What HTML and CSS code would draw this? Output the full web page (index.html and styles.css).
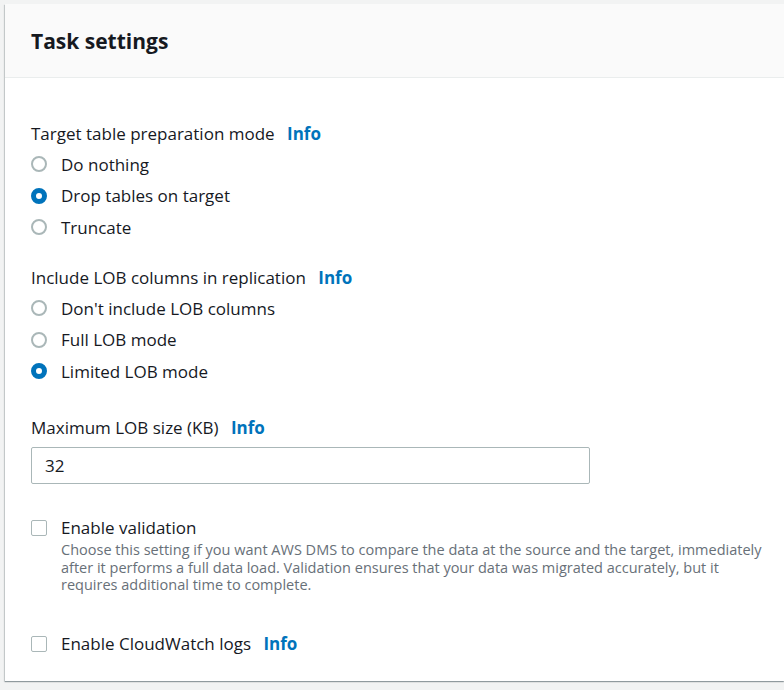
FILE: index.html
```html
<!DOCTYPE html>
<html lang="en">
<head>
<meta charset="utf-8">
<title>Task settings</title>
<link rel="stylesheet" href="styles.css">
</head>
<body>
<div class="panel">
  <div class="panel-header">
    <h2 class="title">Task settings</h2>
  </div>
  <div class="panel-body">
    <div class="field">
      <div class="label">Target table preparation mode <a class="info">Info</a></div>
      <div class="options">
        <div class="option"><span class="radio"></span><span class="opt-text">Do nothing</span></div>
        <div class="option"><span class="radio checked"></span><span class="opt-text">Drop tables on target</span></div>
        <div class="option"><span class="radio"></span><span class="opt-text">Truncate</span></div>
      </div>
    </div>
    <div class="field field-lob">
      <div class="label">Include LOB columns in replication <a class="info">Info</a></div>
      <div class="options">
        <div class="option"><span class="radio"></span><span class="opt-text">Don't include LOB columns</span></div>
        <div class="option"><span class="radio"></span><span class="opt-text">Full LOB mode</span></div>
        <div class="option"><span class="radio checked"></span><span class="opt-text">Limited LOB mode</span></div>
      </div>
    </div>
    <div class="field field-size">
      <div class="label">Maximum LOB size (KB) <a class="info">Info</a></div>
      <div class="input">32</div>
    </div>
    <div class="check-row check-validation">
      <span class="checkbox"></span>
      <div class="check-content">
        <div class="check-label">Enable validation</div>
        <div class="desc">Choose this setting if you want AWS DMS to compare the data at the source and the target, immediately after it performs a full data load. Validation ensures that your data was migrated accurately, but it requires additional time to complete.</div>
      </div>
    </div>
    <div class="check-row check-logs">
      <span class="checkbox"></span>
      <div class="check-content">
        <div class="check-label">Enable CloudWatch logs <a class="info">Info</a></div>
      </div>
    </div>
  </div>
</div>
</body>
</html>
```
FILE: styles.css
```css
html, body {
  margin: 0;
  padding: 0;
}
body {
  background: #f2f3f3;
  overflow: hidden;
  font-family: "Open Sans", "Noto Sans", sans-serif;
  color: #16191f;
  padding: 4px 0 0 5px;
  height: 690px;
  box-sizing: border-box;
}
.panel {
  width: 779px;
  background: #ffffff;
  box-shadow: 0 1px 1px 0 rgba(0, 28, 36, 0.3), -1px 1px 1px 0 rgba(0, 28, 36, 0.15);
}
.panel-header {
  height: 73px;
  background: #fafafa;
  border-bottom: 1px solid #eaeded;
  display: flex;
  align-items: center;
  padding-left: 26px;
}
.title {
  margin: 0;
  font-size: 21px;
  font-weight: 700;
  line-height: 24px;
}
.panel-body {
  padding: 45px 26px 26px 26px;
}
.label {
  font-size: 17px;
  line-height: 22px;
}
.info {
  color: #0073bb;
  font-weight: 700;
  margin-left: 8px;
}
.options {
  margin-top: 3.5px;
}
.option {
  display: flex;
  align-items: center;
  height: 31.5px;
}
.opt-text {
  font-size: 17px;
  margin-left: 14px;
}
.radio {
  width: 16px;
  height: 16px;
  box-sizing: border-box;
  border: 2px solid #aab7b8;
  border-radius: 50%;
  background: #fff;
}
.radio.checked {
  border: 5px solid #0073bb;
}
.field-lob {
  margin-top: 24px;
}
.field-size {
  margin-top: 30px;
}
.input {
  margin-top: 8px;
  width: 559px;
  height: 37px;
  box-sizing: border-box;
  border: 1px solid #aab7b8;
  border-radius: 2px;
  font-size: 17px;
  line-height: 35px;
  padding-left: 13px;
}
.check-row {
  display: flex;
  align-items: flex-start;
}
.check-validation {
  margin-top: 33px;
}
.check-logs {
  margin-top: 39px;
}
.checkbox {
  flex: none;
  width: 16px;
  height: 16px;
  box-sizing: border-box;
  border: 1.5px solid #aab7b8;
  border-radius: 2px;
  margin-top: 3px;
}
.check-content {
  margin-left: 14px;
}
.check-label {
  font-size: 17px;
  line-height: 22px;
}
.desc {
  margin-top: 2px;
  font-size: 14.5px;
  line-height: 17.5px;
  color: #687078;
  width: 705px;
}
```
